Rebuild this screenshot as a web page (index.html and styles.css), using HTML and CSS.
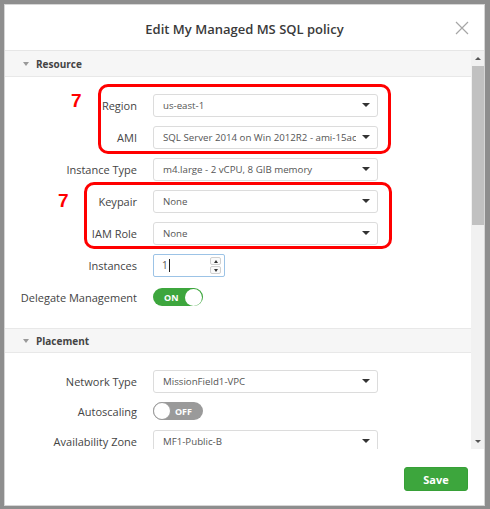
FILE: index.html
```html
<!DOCTYPE html>
<html>
<head>
<meta charset="utf-8">
<link rel="stylesheet" href="styles.css">
</head>
<body>
<div class="modal">
  <div class="modal-header">
    <h1 class="title">Edit My Managed MS SQL policy</h1>
    <span class="close" aria-label="close">
      <svg width="14" height="14" viewBox="0 0 14 14"><path d="M1 1L13 13M13 1L1 13" stroke="#a6a6a6" stroke-width="1.2" fill="none"/></svg>
    </span>
  </div>
  <div class="modal-body">
    <div class="scroll-content">
      <div class="section-head"><span class="tri"></span>Resource</div>
      <div class="form form-resource">
        <label class="lbl">Region</label>
        <div class="select"><span>us-east-1</span><i class="caret"></i></div>
        <label class="lbl">AMI</label>
        <div class="select"><span>SQL Server 2014 on Win 2012R2 - ami-15ac</span><i class="caret"></i></div>
        <label class="lbl">Instance Type</label>
        <div class="select"><span>m4.large - 2 vCPU, 8 GIB memory</span><i class="caret"></i></div>
        <label class="lbl">Keypair</label>
        <div class="select"><span>None</span><i class="caret"></i></div>
        <label class="lbl">IAM Role</label>
        <div class="select"><span>None</span><i class="caret"></i></div>
        <label class="lbl">Instances</label>
        <div class="number"><span class="num-val">1</span><span class="cursor"></span>
          <span class="spin"><b class="up"></b><b class="down"></b></span>
        </div>
        <label class="lbl">Delegate Management</label>
        <div class="toggle on"><span class="tg-text">ON</span><span class="knob"></span></div>
      </div>
      <div class="section-head section-border"><span class="tri"></span>Placement</div>
      <div class="form form-placement">
        <label class="lbl">Network Type</label>
        <div class="select"><span>MissionField1-VPC</span><i class="caret"></i></div>
        <label class="lbl">Autoscaling</label>
        <div class="toggle off"><span class="knob"></span><span class="tg-text">OFF</span></div>
        <label class="lbl">Availability Zone</label>
        <div class="select"><span>MF1-Public-B</span><i class="caret"></i></div>
      </div>
    </div>
    <div class="scrollbar">
      <span class="sb-up"></span>
      <div class="sb-track"><div class="sb-thumb"></div></div>
      <span class="sb-down"></span>
    </div>
  </div>
  <div class="modal-footer">
    <button class="save">Save</button>
  </div>
</div>
<div class="anno box1"></div>
<div class="anno box2"></div>
<span class="num7 n1">7</span>
<span class="num7 n2">7</span>
</body>
</html>
```

FILE: styles.css
```css
html, body {
  margin: 0;
  padding: 0;
}
body {
  width: 490px;
  height: 509px;
  background: #8e8e8e;
  font-family: "Open Sans", "DejaVu Sans", sans-serif;
  color: #444;
  padding: 4px 0 0 4px;
  box-sizing: border-box;
  position: relative;
  overflow: hidden;
}
.modal {
  width: 481px;
  height: 502px;
  background: #fff;
  border: 1px solid #d6d6d6;
  box-sizing: border-box;
  display: flex;
  flex-direction: column;
}
.modal-header {
  height: 46px;
  flex: none;
  border-bottom: 1px solid #e6e6e6;
  box-sizing: border-box;
  display: flex;
  align-items: center;
  justify-content: center;
  position: relative;
}
.title {
  margin: 2px 0 0 0;
  font-size: 13px;
  font-weight: 600;
  color: #3a3a3a;
}
.close {
  position: absolute;
  right: 15px;
  top: 16px;
  display: block;
  line-height: 0;
}
.modal-body {
  height: 398px;
  flex: none;
  display: flex;
  overflow: hidden;
}
.scroll-content {
  flex: 1;
  overflow: hidden;
}
.section-head {
  height: 26px;
  background: #f6f6f6;
  border-bottom: 1px solid #e8e8e8;
  box-sizing: border-box;
  display: flex;
  align-items: center;
  padding-left: 18px;
  font-size: 10px;
  font-weight: 700;
  color: #444;
}
.section-border {
  border-top: 1px solid #e8e8e8;
  height: 25px;
}
.tri {
  width: 0;
  height: 0;
  border-left: 3.5px solid transparent;
  border-right: 3.5px solid transparent;
  border-top: 4px solid #999;
  margin-right: 7px;
}
.form {
  display: grid;
  grid-template-columns: 132px 225px;
  column-gap: 16px;
  align-items: center;
}
.form-resource {
  padding: 12px 0 15px;
  grid-auto-rows: 32px;
}
.form-placement {
  padding: 12px 0 0;
  grid-template-rows: 32px 28px 32px;
}
.lbl {
  text-align: right;
  font-size: 11px;
  color: #444;
  white-space: nowrap;
}
.select {
  height: 23px;
  border: 1px solid #dcdcdc;
  border-radius: 3px;
  box-sizing: border-box;
  display: flex;
  align-items: center;
  padding: 0 7px 0 9px;
  font-size: 9.7px;
  color: #555;
  position: relative;
}
.select span {
  flex: 1;
  white-space: nowrap;
  overflow: hidden;
}
.caret {
  width: 0;
  height: 0;
  border-left: 4px solid transparent;
  border-right: 4px solid transparent;
  border-top: 4px solid #333;
  margin-left: 6px;
  flex: none;
}
.number {
  width: 72px;
  height: 23px;
  border: 1px solid #9cc3e6;
  border-radius: 2px;
  box-sizing: border-box;
  display: flex;
  align-items: center;
  padding-left: 8px;
  font-size: 10px;
  color: #555;
  position: relative;
}
.cursor {
  width: 1px;
  height: 13px;
  background: #222;
  margin-left: 1px;
}
.spin {
  position: absolute;
  right: 3px;
  top: 2px;
  display: flex;
  flex-direction: column;
  gap: 1px;
}
.spin b {
  width: 11px;
  height: 8px;
  border: 1px solid #d0d0d0;
  border-radius: 2px;
  box-sizing: border-box;
  background: #fafafa;
  position: relative;
}
.spin b::after {
  content: "";
  position: absolute;
  left: 2.5px;
  top: 2px;
  border-left: 2.5px solid transparent;
  border-right: 2.5px solid transparent;
}
.spin .up::after { border-bottom: 3px solid #333; }
.spin .down::after { border-top: 3px solid #333; }
.toggle {
  width: 50px;
  height: 18px;
  border-radius: 9px;
  box-sizing: border-box;
  display: flex;
  align-items: center;
  font-size: 9px;
  font-weight: 700;
  color: #fff;
}
.toggle.on {
  background: #3da63d;
  padding: 0 1px 0 11px;
  justify-content: space-between;
}
.toggle.off {
  background: #9a9a9a;
  padding: 0 11px 0 0;
  justify-content: space-between;
}
.knob {
  width: 17px;
  height: 17px;
  background: #fff;
  border-radius: 50%;
  box-sizing: border-box;
}
.toggle.off .knob {
  border: 1px solid #9a9a9a;
  width: 18px;
  height: 18px;
}
.scrollbar {
  width: 13px;
  flex: none;
  background: #f1f1f1;
  display: flex;
  flex-direction: column;
  align-items: center;
}
.sb-up, .sb-down {
  height: 15px;
  flex: none;
  display: flex;
  align-items: center;
  justify-content: center;
}
.sb-up::after {
  content: "";
  border-left: 3px solid transparent;
  border-right: 3px solid transparent;
  border-bottom: 3px solid #555;
}
.sb-down::after {
  content: "";
  border-left: 3px solid transparent;
  border-right: 3px solid transparent;
  border-top: 3px solid #555;
}
.sb-track {
  flex: 1;
  width: 100%;
  display: flex;
  justify-content: center;
}
.sb-thumb {
  width: 12px;
  height: 159px;
  background: #c1c1c1;
}
.modal-footer {
  flex: 1;
  display: flex;
  justify-content: flex-end;
  align-items: flex-start;
  padding: 18px 16px 0 0;
}
.save {
  width: 64px;
  height: 24px;
  background: #3da63d;
  border: 1px solid #37a037;
  border-radius: 3px;
  color: #fff;
  font-family: "Open Sans", "DejaVu Sans", sans-serif;
  font-weight: 700;
  font-size: 11px;
  padding: 0;
}
.anno {
  position: absolute;
  border: 3px solid #f00;
  border-radius: 10px;
  box-sizing: border-box;
}
.box1 {
  left: 98px;
  top: 84px;
  width: 293px;
  height: 70px;
}
.box2 {
  left: 84px;
  top: 182px;
  width: 308px;
  height: 67px;
}
.num7 {
  position: absolute;
  color: #f00;
  font-family: "Liberation Sans", Arial, sans-serif;
  font-weight: 700;
  font-size: 19px;
  line-height: 1;
}
.n1 { left: 71px; top: 91px; }
.n2 { left: 58px; top: 191px; }
```
